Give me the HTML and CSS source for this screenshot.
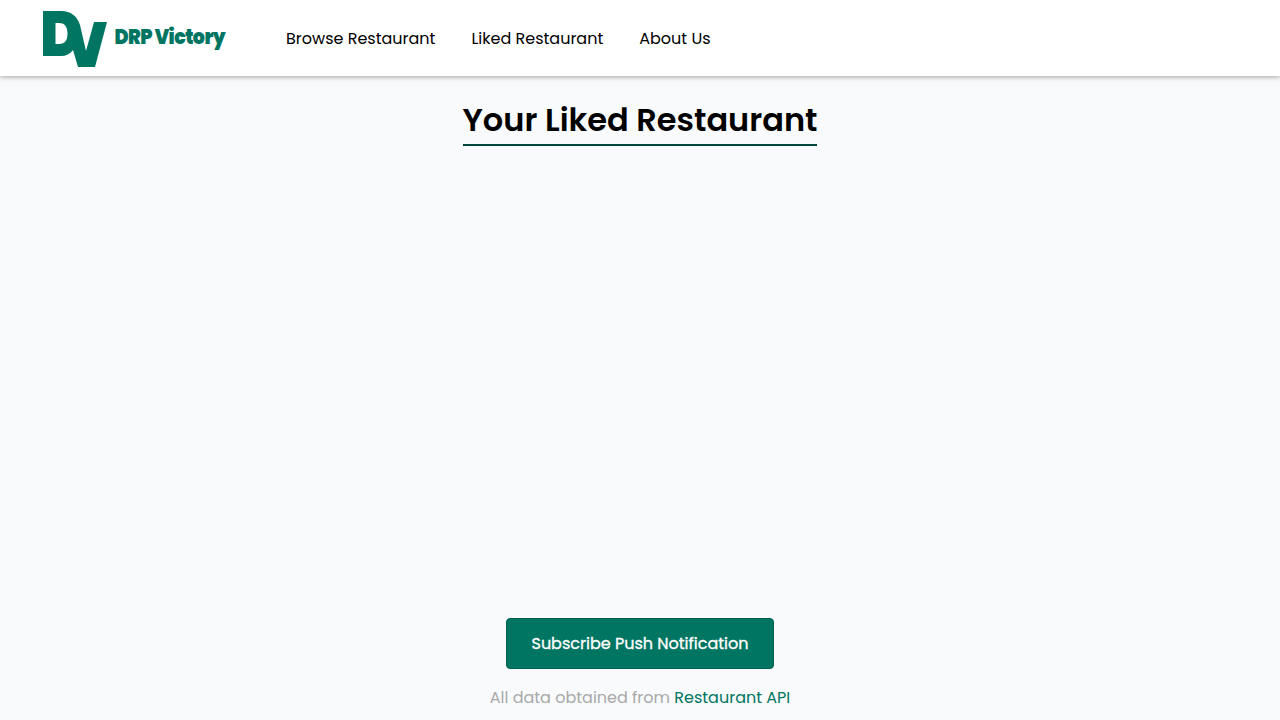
FILE: index.html
```html
<!DOCTYPE html>
<html lang="en">
<head>
<meta charset="utf-8">
<title>DRP Victory</title>
<link rel="stylesheet" href="styles.css">
</head>
<body>
<header class="header">
  <a class="brand" href="#" aria-label="DRP Victory">
    <svg class="logo" width="190" height="60" viewBox="0 0 190 60">
      <path fill-rule="evenodd" d="M1 3H19C29 3 35 8 38 17L44 43L52 14H65L53 59H36L31 42C28 46 24 48 19 48H1ZM13.500 15V36H17C23 36 25.500 32 25.500 25.500C25.500 18 22 15 17 15Z"/>
      <text class="logo-text" x="72.500" y="36" textLength="110.500" lengthAdjust="spacingAndGlyphs">DRP Victory</text>
    </svg>
  </a>
  <nav class="nav">
    <a href="#">Browse Restaurant</a>
    <a href="#">Liked Restaurant</a>
    <a href="#">About Us</a>
  </nav>
</header>
<main class="main">
  <h1 class="title">Your Liked Restaurant</h1>
</main>
<footer class="footer">
  <button class="subscribe" type="button">Subscribe Push Notification</button>
  <p class="credit">All data obtained from <a class="credit-link" href="#">Restaurant API</a></p>
</footer>
</body>
</html>
```
FILE: styles.css
```css
* { box-sizing: border-box; }
body {
  margin: 0;
  height: 720px;
  display: flex;
  flex-direction: column;
  background: #f8fafc;
  color: #000;
  font: 16px/24px Poppins, Inter, sans-serif;
  white-space: nowrap;
}
a { color: inherit; text-decoration: none; }
.header {
  height: 76px;
  flex: none;
  display: flex;
  align-items: center;
  padding-left: 42px;
  background: #fff;
  box-shadow: 0 1px 5px rgba(0, 0, 0, .35);
}
.brand { width: 244px; height: 60px; }
.logo { display: block; fill: #007562; overflow: visible; }
.logo-text { font: 900 20.500px Poppins, Inter, sans-serif; letter-spacing: -.6px; }
.nav { display: flex; gap: 36px; padding-top: 2px; }
.main { flex: 1; display: flex; justify-content: center; align-items: flex-start; padding-top: 20px; }
.title {
  margin: 0;
  height: 50px;
  border-bottom: 2px solid #00473b;
  font-size: 32px;
  line-height: 48px;
  font-weight: 600;
}
.footer { display: flex; flex-direction: column; align-items: center; }
.subscribe {
  width: 268px;
  height: 51px;
  padding: 0;
  border: 1px solid #006050;
  border-radius: 4px;
  background: #007562;
  color: #fff;
  font: 400 16px/24px Poppins, Inter, sans-serif;
  -webkit-text-stroke: .3px #fff;
}
.credit { margin: 17px 0 10px; color: #a9a9a9; }
.credit-link { color: #007562; }
```
